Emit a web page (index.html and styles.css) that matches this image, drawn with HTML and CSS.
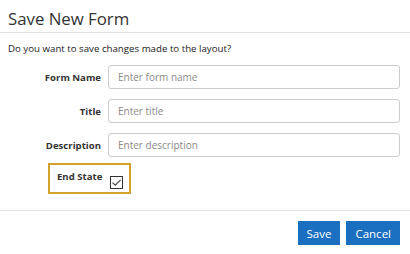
FILE: index.html
```html
<!DOCTYPE html>
<html>
<head>
<meta charset="utf-8">
<link rel="stylesheet" href="styles.css">
</head>
<body>
<div class="dialog">
  <div class="header"><h1 class="title">Save New Form</h1></div>
  <div class="body">
    <p class="question">Do you want to save changes made to the layout?</p>
    <div class="row">
      <label class="label">Form Name</label>
      <input class="input" type="text" placeholder="Enter form name">
    </div>
    <div class="row">
      <label class="label">Title</label>
      <input class="input" type="text" placeholder="Enter title">
    </div>
    <div class="row">
      <label class="label">Description</label>
      <input class="input" type="text" placeholder="Enter description">
    </div>
    <div class="end-state">
      <span class="label-end">End State</span>
      <span class="checkbox">
        <svg width="11" height="11" viewBox="0 0 11 11"><path d="M1.5 5.6 L4.3 8.2 L9.6 2.8" fill="none" stroke="#444" stroke-width="1.1"/></svg>
      </span>
    </div>
  </div>
  <div class="footer">
    <button class="btn">Save</button>
    <button class="btn">Cancel</button>
  </div>
</div>
</body>
</html>
```
FILE: styles.css
```css
* { box-sizing: border-box; }
html, body { margin: 0; padding: 0; background: #fff; }
body { font-family: "Open Sans", "Liberation Sans", sans-serif; color: #333; width: 410px; height: 254px; overflow: hidden; }
.dialog { width: 410px; }
.header { height: 33px; border-bottom: 1px solid #e2e2e2; padding: 7px 8px 0; }
.title { margin: 0; font-size: 16.8px; font-weight: 400; line-height: 24px; color: #333; }
.body { padding: 8px 8px 0 8px; height: 178px; border-bottom: 1px solid #e2e2e2; }
.question { margin: 0 0 3px; font-size: 9.7px; line-height: 16px; color: #222; }
.row { display: flex; align-items: center; height: 34px; }
.label { width: 93px; margin-right: 7px; text-align: right; font-size: 9.6px; font-weight: 700; color: #333; }
.input { width: 292px; height: 24px; border: 1px solid #ccc; border-radius: 3px; padding: 0 9px; font-family: "Open Sans", "Liberation Sans", sans-serif; font-size: 10px; color: #333; outline: none; }
.input::placeholder { color: #8a8a8a; }
.end-state { margin: 1px 0 0 40px; width: 83px; height: 31px; border: 2px solid #d4a22a; display: flex; align-items: flex-start; padding: 5px 0 0 7px; }
.label-end { font-size: 9.6px; font-weight: 700; color: #333; line-height: 14px; }
.checkbox { margin: 6px 0 0 8px; width: 13px; height: 13px; border: 1.5px solid #333; display: flex; align-items: center; justify-content: center; background: #fff; }
.footer { display: flex; justify-content: flex-end; gap: 6px; padding: 10px 10px 0 0; }
.btn { height: 24px; padding: 0 9px; background: #1a6fc0; color: #fff; border: none; font-family: "Open Sans", "Liberation Sans", sans-serif; font-size: 11.5px; border-radius: 0; }
```
